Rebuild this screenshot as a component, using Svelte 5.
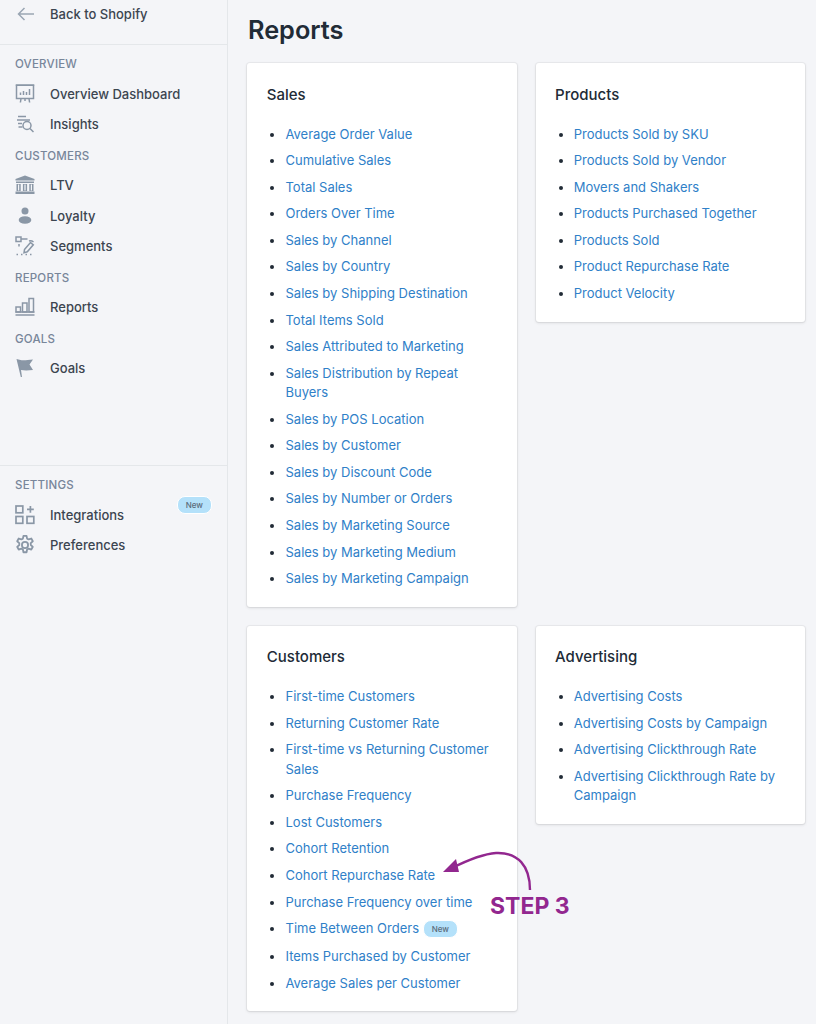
<script lang="ts">
  const sales = [
    "Average Order Value", "Cumulative Sales", "Total Sales", "Orders Over Time", "Sales by Channel",
    "Sales by Country", "Sales by Shipping Destination", "Total Items Sold", "Sales Attributed to Marketing",
    "Sales Distribution by Repeat Buyers", "Sales by POS Location", "Sales by Customer", "Sales by Discount Code",
    "Sales by Number or Orders", "Sales by Marketing Source", "Sales by Marketing Medium", "Sales by Marketing Campaign"
  ];
  const products = [
    "Products Sold by SKU", "Products Sold by Vendor", "Movers and Shakers", "Products Purchased Together",
    "Products Sold", "Product Repurchase Rate", "Product Velocity"
  ];
  const customers = [
    "First-time Customers", "Returning Customer Rate", "First-time vs Returning Customer Sales", "Purchase Frequency",
    "Lost Customers", "Cohort Retention", "Cohort Repurchase Rate", "Purchase Frequency over time",
    "Time Between Orders", "Items Purchased by Customer", "Average Sales per Customer"
  ];
  const advertising = [
    "Advertising Costs", "Advertising Costs by Campaign", "Advertising Clickthrough Rate",
    "Advertising Clickthrough Rate by Campaign"
  ];
  const cards = [
    { title: "Sales", links: sales },
    { title: "Products", links: products },
    { title: "Customers", links: customers },
    { title: "Advertising", links: advertising }
  ];
</script>

{#snippet navItem(label: string)}
  <a class="nav-item" href="#top">
    <span class="nav-icon">
      {#if label === "Overview Dashboard"}
        <svg viewBox="0 0 20 20" fill="none" stroke="#8a97a6" stroke-width="1.500">
          <rect x="1.500" y="1.200" width="17" height="13.300" />
          <path d="M0.800 1.200h18.400M5.500 11v-2.500M8.500 11v-4M11.500 11v-3M14.500 11v-6M6 14.500l-.6 4M14 14.500l.6 4M10 14.500v2.600" />
        </svg>
      {:else if label === "Insights"}
        <svg viewBox="0 0 20 20" fill="none" stroke="#8a97a6" stroke-width="1.500">
          <path d="M3 2.500h8M2 6h13M3 9.500h4M3.500 13h4" />
          <circle cx="12" cy="11.500" r="4" />
          <path d="M15 14.500l3.500 3.500" />
        </svg>
      {:else if label === "LTV"}
        <svg viewBox="0 0 20 20" fill="#8a97a6">
          <path d="M10 .5l9.500 3.600v1.400H.5V4.100zM1 6.500h18V8H1zM1.500 9h4.200v7H1.500zM7.900 9h4.200v7H7.900zM14.300 9h4.200v7h-4.200zM.5 16.500h19V19H.5z" />
          <path d="M3 9.500h1.200v6H3zM9.400 9.500h1.200v6H9.400zM15.800 9.500H17v6h-1.200z" fill="#f4f5f8" />
        </svg>
      {:else if label === "Loyalty"}
        <svg viewBox="0 0 20 20" fill="#8a97a6">
          <circle cx="10" cy="5" r="3.500" />
          <ellipse cx="10" cy="14" rx="6.300" ry="3.800" />
        </svg>
      {:else if label === "Segments"}
        <svg viewBox="0 0 20 20" fill="none" stroke="#8a97a6" stroke-width="1.500">
          <rect x="1" y="1" width="5" height="4.500" />
          <path d="M6 3h6.500M4 8v2.500M1.500 18.500h1.500M6 18.500h1.500M10.500 18.500h1.500M15 18.500h1.500" />
          <path d="M9.500 13.500l6-7 2.800 2.300-6 7-3.300 1z" />
          <path d="M14 5c1.500-.5 3-.3 4.500 1" />
        </svg>
      {:else if label === "Reports"}
        <svg viewBox="0 0 20 20" fill="none" stroke="#8a97a6" stroke-width="1.500">
          <rect x="1" y="10" width="4.500" height="5" />
          <rect x="7.500" y="6" width="4.500" height="9" />
          <rect x="14" y="1.500" width="4.500" height="13.500" />
          <path d="M.5 15h19M.5 18h19" />
        </svg>
      {:else if label === "Goals"}
        <svg viewBox="0 0 20 20" fill="#8a97a6">
          <path d="M1.500 1l3 .8c3 .8 6 .7 13.500-.3l-3.500 5 3.500 5.500c-5 .6-9 .6-12 0l1 7h-1.200z" />
        </svg>
      {:else if label === "Integrations"}
        <svg viewBox="0 0 20 20" fill="none" stroke="#8a97a6" stroke-width="1.700">
          <rect x="1" y="1" width="6.800" height="6.800" />
          <rect x="1" y="11.500" width="6.800" height="6.800" />
          <rect x="12" y="11.500" width="6.800" height="6.800" />
          <path d="M15.400 1v6.800M12 4.400h6.800" />
        </svg>
      {:else if label === "Preferences"}
        <svg viewBox="1 1 22 22" fill="none" stroke="#8a97a6" stroke-width="2" stroke-linejoin="round">
          <path d="M10.300 2h3.400l.6 3 1.700.9 2.900-1 1.700 3-2.300 2 .1 2.100 2.200 2-1.700 3-2.900-1-1.700 1-.6 3h-3.400l-.6-3-1.700-1-2.900 1-1.700-3 2.300-2v-2.100l-2.300-2 1.700-3 2.900 1 1.700-.9z" />
          <circle cx="12" cy="12" r="3.400" />
        </svg>
      {/if}
    </span>
    <span>{label}</span>
    {#if label === "Integrations"}
      <span class="badge nav-badge">New</span>
    {/if}
  </a>
{/snippet}

<div class="page" id="top">
  <aside class="sidebar">
    <a class="back" href="#top">
      <svg viewBox="0 0 17 14" width="17" height="14" fill="none" stroke="#9aa6b3" stroke-width="1.500">
        <path d="M17 7H1.500M7.500 1L1.500 7l6 6" />
      </svg>
      <span>Back to Shopify</span>
    </a>
    <nav class="nav-top">
      <div class="nav-heading">OVERVIEW</div>
      {@render navItem("Overview Dashboard")}
      {@render navItem("Insights")}
      <div class="nav-heading">CUSTOMERS</div>
      {@render navItem("LTV")}
      {@render navItem("Loyalty")}
      {@render navItem("Segments")}
      <div class="nav-heading">REPORTS</div>
      {@render navItem("Reports")}
      <div class="nav-heading">GOALS</div>
      {@render navItem("Goals")}
    </nav>
    <nav class="nav-bottom">
      <div class="nav-heading">SETTINGS</div>
      {@render navItem("Integrations")}
      {@render navItem("Preferences")}
    </nav>
  </aside>

  <main class="main">
    <h1>Reports</h1>
    <div class="grid">
      {#each cards as card}
        <section class="card">
          <h2>{card.title}</h2>
          <ul>
            {#each card.links as link}
              <li>
                <a href="#top">{link}</a>
                {#if link === "Time Between Orders"}
                  <span class="badge">New</span>
                {/if}
              </li>
            {/each}
          </ul>
        </section>
      {/each}
    </div>
  </main>

  <div class="note">
    <svg viewBox="0 0 100 50" width="100" height="50" fill="none">
      <path d="M90 46C90 22 78 8 56 9C42 10 24 18 12 24" stroke="#92278f" stroke-width="2.400" />
      <path d="M3 28L16 15L19 28z" fill="#92278f" />
    </svg>
    <span>STEP 3</span>
  </div>
</div>

<style>
  :global(body) {
    margin: 0;
    background: #f4f5f8;
  }

  .page {
    position: relative;
    display: flex;
    width: 816px;
    height: 1024px;
    overflow: hidden;
    background: #f4f5f8;
    font-family: Inter, "Liberation Sans", sans-serif;
    font-size: 13px;
    color: #212b36;
  }

  .sidebar {
    flex: none;
    width: 228px;
    box-sizing: border-box;
    border-right: 1px solid #e4e7ea;
  }

  a {
    text-decoration: none;
  }

  .back {
    display: flex;
    align-items: center;
    gap: 16px;
    height: 45px;
    box-sizing: border-box;
    padding: 0 0 17px 17px;
    border-bottom: 1px solid #e4e7ea;
    color: #3c4550;
    font-weight: 500;
  }

  .nav-top {
    padding-top: 3px;
    height: 421px;
    box-sizing: border-box;
    border-bottom: 1px solid #e4e7ea;
  }

  .nav-bottom {
    padding-top: 3px;
  }

  .nav-heading {
    height: 30.500px;
    line-height: 32px;
    padding-left: 15px;
    font-size: 11.500px;
    font-weight: 500;
    letter-spacing: 0.2px;
    color: #78869a;
  }

  .nav-item {
    position: relative;
    display: flex;
    align-items: center;
    height: 30.500px;
    padding-left: 15px;
    color: #3c4550;
    font-weight: 500;
  }

  .nav-icon {
    display: flex;
    width: 35px;
    flex: none;
  }

  .nav-icon svg {
    width: 20px;
    height: 20px;
  }

  .badge {
    display: inline-block;
    padding: 0 8px;
    height: 16px;
    line-height: 16px;
    border-radius: 8px;
    background: #b4e1fa;
    border: 1px solid #fff;
    color: #5b6b7a;
    font-size: 8px;
    font-weight: 500;
    vertical-align: 1px;
    margin: 0 0 1.500px 0;
  }

  .nav-badge {
    position: absolute;
    right: 15px;
    top: -4px;
    margin: 0;
  }

  .main {
    flex: 1;
    padding: 0 10px 0 19.300px;
    min-width: 0;
  }

  h1 {
    margin: 0;
    height: 63px;
    box-sizing: border-box;
    padding: 13px 0 0 0.700px;
    font-size: 25.300px;
    line-height: 33px;
    font-weight: 600;
    color: #212b36;
  }

  .grid {
    display: grid;
    grid-template-columns: 269.300px 269.300px;
    column-gap: 19px;
    row-gap: 19px;
    align-items: start;
  }

  .card {
    background: #fff;
    border-radius: 3px;
    box-shadow: 0 0 0 1px rgba(63, 63, 68, 0.05), 0 1px 3px 0 rgba(63, 63, 68, 0.15);
    padding: 20.500px 19px 18.300px 19.500px;
  }

  h2 {
    margin: 0 0 20px;
    font-size: 15px;
    line-height: 21px;
    font-weight: 500;
    color: #212b36;
  }

  ul {
    margin: 0;
    padding: 0 0 0 18.700px;
  }

  li {
    margin-bottom: 7.400px;
    line-height: 19.200px;
    font-size: 13px;
    color: #212b36;
  }

  li:last-child {
    margin-bottom: 0;
  }

  li a {
    color: #2f80c8;
  }

  .note {
    position: absolute;
    left: 440px;
    top: 844px;
    width: 140px;
  }

  .note svg {
    display: block;
  }

  .note span {
    display: block;
    margin: -1px 0 0 50px;
    font-size: 23px;
    line-height: 26px;
    font-weight: 700;
    color: #92278f;
  }
</style>
